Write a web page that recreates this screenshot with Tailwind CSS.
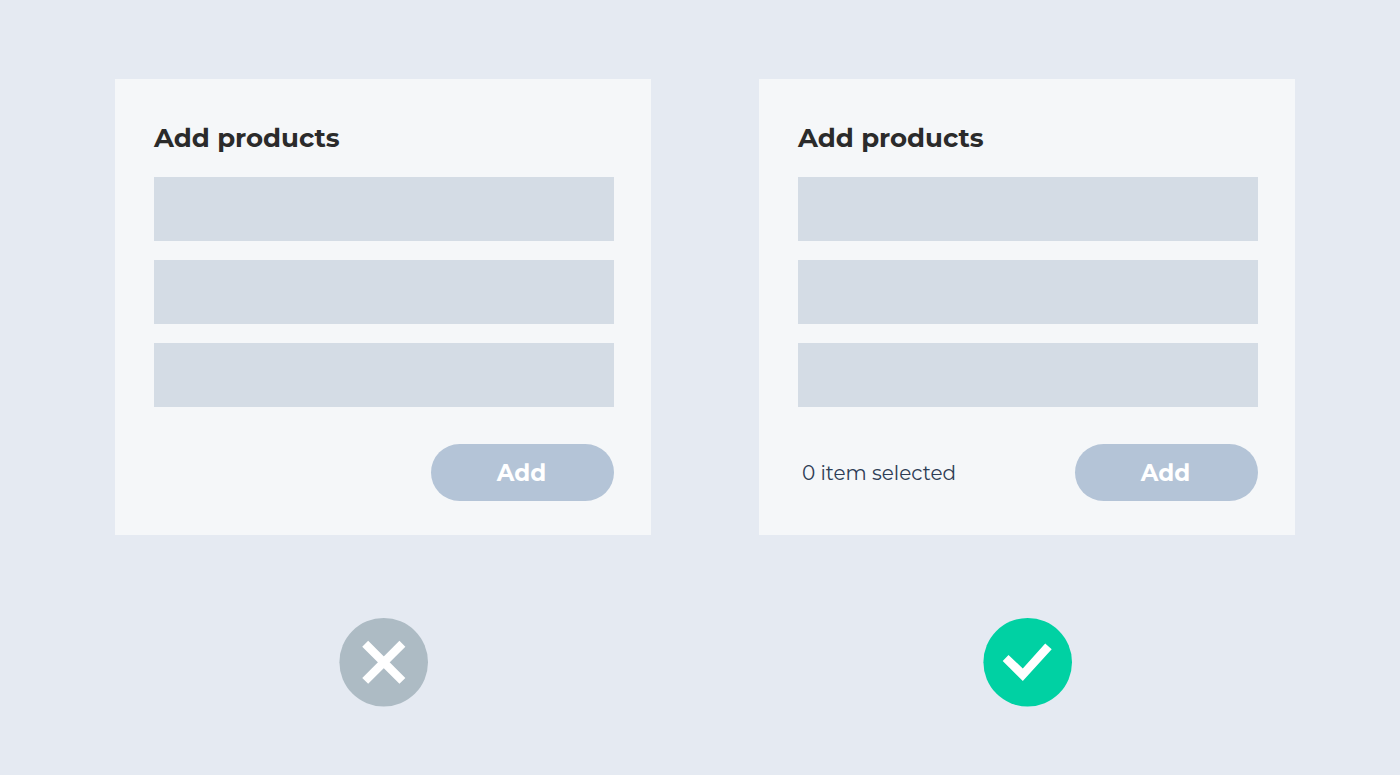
<!DOCTYPE html>
<html lang="en">

<head>
    <meta charset="UTF-8">
    <meta name="viewport" content="width=device-width, initial-scale=1.0">
    <title>Add products</title>
    <script src="https://cdn.jsdelivr.net/npm/@tailwindcss/browser@4"></script>
</head>

<body class="bg-[#e5eaf2] min-h-screen font-[Montserrat,Inter,sans-serif]">

    <main class="grid grid-cols-2 gap-x-[108px] pt-[79px] pl-[115px] pr-[105px]">

        <!-- without the counter -->
        <section class="flex flex-col items-center gap-[83px]">
            <form class="w-full bg-[#f5f7f9] pt-[39px] pb-[34px] pl-[39px] pr-[37px]">
                <h2 class="text-[26px] leading-10 font-bold text-[#2b2b2b]">Add products</h2>
                <div class="mt-[19px] flex flex-col gap-[19px]">
                    <div class="h-16 bg-[#d4dce5]"></div>
                    <div class="h-16 bg-[#d4dce5]"></div>
                    <div class="h-16 bg-[#d4dce5]"></div>
                </div>
                <div class="mt-[37px] flex items-center justify-end">
                    <button type="button" class="w-[183px] h-[57px] pt-0.5 pr-0.5 rounded-full bg-[#b4c4d7] text-white text-[23px] font-bold">Add</button>
                </div>
            </form>
            <svg class="size-[89px]" viewBox="0 0 89 89" role="img" aria-label="Don't">
                <circle cx="44.7" cy="44.3" r="44.3" fill="#adbbc4" />
                <path d="M26.2 25.7L63.4 62.9M63.4 25.7L26.2 62.9" stroke="#fff" stroke-width="8.4" fill="none" />
            </svg>
        </section>

        <!-- with the counter -->
        <section class="flex flex-col items-center gap-[83px]">
            <form class="w-full bg-[#f5f7f9] pt-[39px] pb-[34px] pl-[39px] pr-[37px]">
                <h2 class="text-[26px] leading-10 font-bold text-[#2b2b2b]">Add products</h2>
                <div class="mt-[19px] flex flex-col gap-[19px]">
                    <div class="h-16 bg-[#d4dce5]"></div>
                    <div class="h-16 bg-[#d4dce5]"></div>
                    <div class="h-16 bg-[#d4dce5]"></div>
                </div>
                <div class="mt-[37px] pl-1 flex items-center justify-between">
                    <p class="text-[20px] text-[#2e3d55]">0 item selected</p>
                    <button type="button" class="w-[183px] h-[57px] pt-0.5 pr-0.5 rounded-full bg-[#b4c4d7] text-white text-[23px] font-bold">Add</button>
                </div>
            </form>
            <svg class="size-[89px]" viewBox="0 0 89 89" role="img" aria-label="Do">
                <circle cx="44.7" cy="44.3" r="44.3" fill="#00d1a3" />
                <path d="M19.7 43L25.5 37L39.8 50.5L62.2 25.5L68.7 31.2L39.8 63Z" fill="#fff" />
            </svg>
        </section>

    </main>

</body>

</html>
